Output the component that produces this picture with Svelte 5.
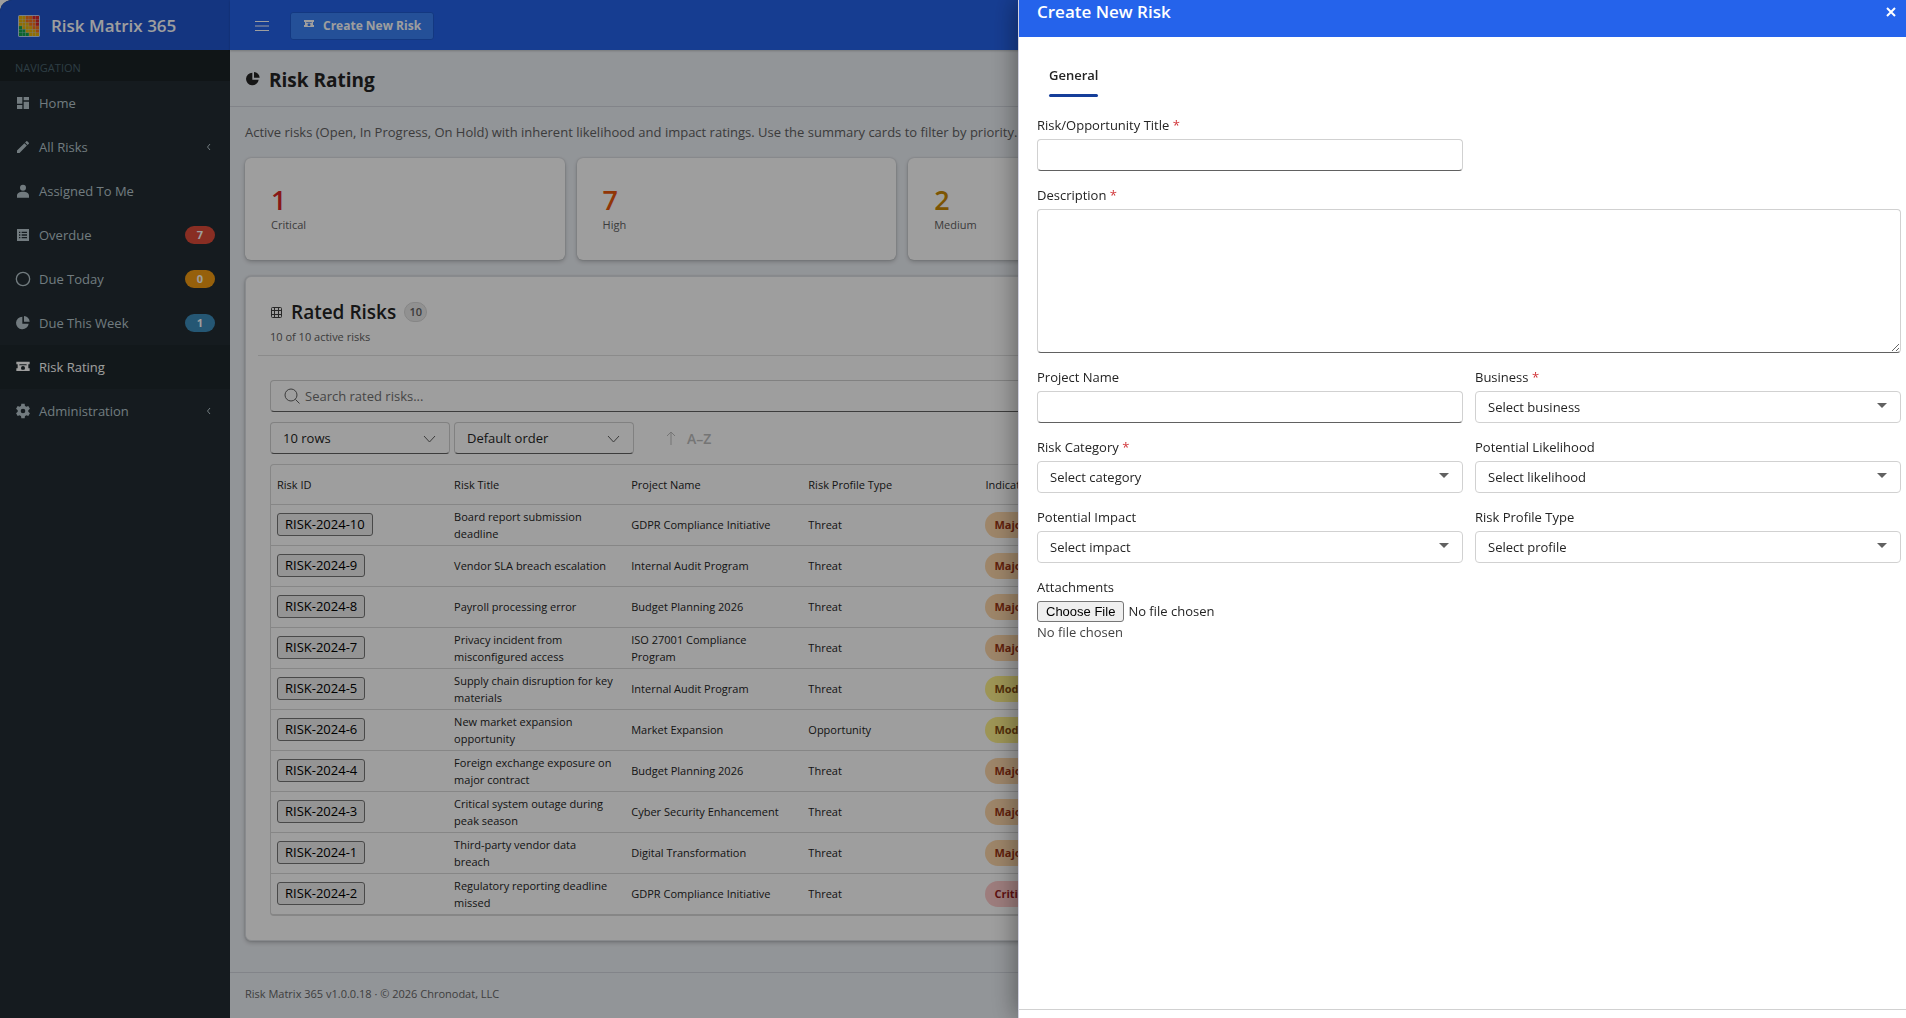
<script>
  const icons = {
    home: 'M3 13h8V3H3v10zm0 8h8v-6H3v6zm10 0h8V10h-8v11zm0-18v5h8V3h-8z',
    edit: 'M3 17.2V21h3.8L17.8 9.9l-3.7-3.7L3 17.2zM20.7 7a1 1 0 0 0 0-1.4l-2.3-2.3a1 1 0 0 0-1.4 0l-1.9 1.8 3.8 3.8L20.7 7z',
    person: 'M12 11.500a4.500 4.500 0 1 0 0-9 4.500 4.500 0 0 0 0 9zM12 13c-5 0-9 2-9 6v3h18v-3c0-4-4-6-9-6z',
    list: 'M3 3h18v18H3V3zm3 4v2h2V7H6zm4 0v2h8V7h-8zm-4 4v2h2v-2H6zm4 0v2h8v-2h-8zm-4 4v2h2v-2H6zm4 0v2h8v-2h-8z',
    circle: 'M12 1a11 11 0 1 0 0 22 11 11 0 0 0 0-22zm0 2a9 9 0 1 1 0 18 9 9 0 0 1 0-18z',
    pie: 'M11 2.500A9.500 9.500 0 1 0 20.500 13H11V2.500zM13.500 1.500V10H22a9 9 0 0 0-8.500-8.500z',
    ticket: 'M2 4h20v4h-2v6h2v4H2v-4h2V8H2V4zm5 4-1 1.500h12L17 8H7zM12 10.500a3 3 0 0 0-3 3c0 1 .5 2 1 2.500h4c.5-.5 1-1.500 1-2.500a3 3 0 0 0-3-3z',
    gear: 'M19.900 13.200a8 8 0 0 0 0-2.400l2.500-2-2.500-4.300-3 1.200a8 8 0 0 0-2-1.200L14.500 1h-5L9 4.500a8 8 0 0 0-2 1.200l-3-1.200-2.400 4.300 2.500 2a8 8 0 0 0 0 2.400l-2.500 2L4 19.500l3-1.200a8 8 0 0 0 2 1.200l.5 3.500h5l.5-3.500a8 8 0 0 0 2-1.200l3 1.200 2.400-4.300-2.500-2zM12 15.500a3.500 3.500 0 1 1 0-7 3.500 3.500 0 0 1 0 7z',
  };

  const navItems = [
    { label: 'Home', icon: 'home' },
    { label: 'All Risks', icon: 'edit', more: true },
    { label: 'Assigned To Me', icon: 'person' },
    { label: 'Overdue', icon: 'list', count: 7, tone: 'red' },
    { label: 'Due Today', icon: 'circle', count: 0, tone: 'orange' },
    { label: 'Due This Week', icon: 'pie', count: 1, tone: 'blue' },
    { label: 'Risk Rating', icon: 'ticket', active: true },
    { label: 'Administration', icon: 'gear', more: true },
  ];

  const cards = [
    { value: 1, label: 'Critical', tone: 'critical' },
    { value: 7, label: 'High', tone: 'high' },
    { value: 2, label: 'Medium', tone: 'medium' },
    { value: 0, label: 'Low', tone: 'low' },
    { value: 0, label: 'Unrated', tone: 'none' },
  ];

  const columns = ['Risk ID', 'Risk Title', 'Project Name', 'Risk Profile Type', 'Indicator', 'Likelihood', 'Impact', 'Status', 'Due Date'];

  const risks = [
    { id: 10, title: 'Board report submission deadline', project: 'GDPR Compliance Initiative', type: 'Threat', level: 'Major' },
    { id: 9, title: 'Vendor SLA breach escalation', project: 'Internal Audit Program', type: 'Threat', level: 'Major' },
    { id: 8, title: 'Payroll processing error', project: 'Budget Planning 2026', type: 'Threat', level: 'Major' },
    { id: 7, title: 'Privacy incident from misconfigured access', project: 'ISO 27001 Compliance\nProgram', type: 'Threat', level: 'Major' },
    { id: 5, title: 'Supply chain disruption for key materials', project: 'Internal Audit Program', type: 'Threat', level: 'Moderate' },
    { id: 6, title: 'New market expansion opportunity', project: 'Market Expansion', type: 'Opportunity', level: 'Moderate' },
    { id: 4, title: 'Foreign exchange exposure on major contract', project: 'Budget Planning 2026', type: 'Threat', level: 'Major' },
    { id: 3, title: 'Critical system outage during peak season', project: 'Cyber Security Enhancement', type: 'Threat', level: 'Major' },
    { id: 1, title: 'Third-party vendor data\nbreach', project: 'Digital Transformation', type: 'Threat', level: 'Major' },
    { id: 2, title: 'Regulatory reporting deadline missed', project: 'GDPR Compliance Initiative', type: 'Threat', level: 'Critical' },
  ];

  // heat map cells of the logo, row by row
  const heat = ['yyoorr', 'yyooor', 'yyyoor', 'gyyyoo', 'ggyyyo', 'gggyyy'];
  const heatColors = { g: '#16a34a', y: '#eab308', o: '#f97316', r: '#dc2626' };

  const fields = [
    { id: 'business', label: 'Business', required: true, prompt: 'Select business' },
    { id: 'category', label: 'Risk Category', required: true, prompt: 'Select category' },
    { id: 'likelihood', label: 'Potential Likelihood', prompt: 'Select likelihood' },
    { id: 'impact', label: 'Potential Impact', prompt: 'Select impact' },
    { id: 'profile', label: 'Risk Profile Type', prompt: 'Select profile' },
  ];

  let sidebarOpen = true;
  let drawerOpen = true;
</script>

<div class="app">
  {#if sidebarOpen}
    <aside class="sidebar">
      <div class="brand">
        <svg class="brand-logo" viewBox="0 0 24 24" aria-hidden="true">
          <rect width="24" height="24" rx="2" fill="#bcd3f5" />
          {#each heat as row, y}
            {#each row.split('') as cell, x}
              <rect x={1 + x * 3.7} y={1 + y * 3.7} width="3.4" height="3.4" fill={heatColors[cell]} />
            {/each}
          {/each}
        </svg>
        <span>Risk Matrix 365</span>
      </div>
      <p class="nav-header">NAVIGATION</p>
      <nav>
        {#each navItems as item (item.label)}
          <a href="#{item.icon}" class="nav-item" class:active={item.active}>
            <svg class="icon" viewBox="0 0 24 24" aria-hidden="true"><path fill-rule="evenodd" d={icons[item.icon]} /></svg>
            <span class="nav-label">{item.label}</span>
            {#if item.tone}
              <span class="badge badge--{item.tone}">{item.count}</span>
            {/if}
            {#if item.more}
              <svg class="nav-more" viewBox="0 0 8 8" aria-hidden="true"><path d="M5 1 2.500 4 5 7" /></svg>
            {/if}
          </a>
        {/each}
      </nav>
    </aside>
  {/if}

  <div class="main">
    <header class="topbar">
      <button class="menu-button" aria-label="Toggle navigation" on:click={() => (sidebarOpen = !sidebarOpen)}>
        <svg viewBox="0 0 14 10" aria-hidden="true"><path d="M0 .5h14M0 5h14M0 9.500h14" /></svg>
      </button>
      <button class="create-button" on:click={() => (drawerOpen = true)}>
        <svg class="icon-small" viewBox="0 0 24 24" aria-hidden="true"><path fill-rule="evenodd" d={icons.ticket} /></svg>
        Create New Risk
      </button>
    </header>

    <div class="page-header">
      <svg class="icon" viewBox="0 0 24 24" aria-hidden="true"><path d={icons.pie} /></svg>
      <h1>Risk Rating</h1>
    </div>

    <main class="content">
      <p class="intro">Active risks (Open, In Progress, On Hold) with inherent likelihood and impact ratings. Use the summary cards to filter by priority.</p>

      <div class="cards">
        {#each cards as card (card.label)}
          <div class="card">
            <strong class="card-value card-value--{card.tone}">{card.value}</strong>
            <span class="card-label">{card.label}</span>
          </div>
        {/each}
      </div>

      <section class="panel">
        <div class="panel-header">
          <div class="panel-title">
            <svg viewBox="0 0 13 13" aria-hidden="true"><path d="M2.500 1.500h8a1 1 0 0 1 1 1v8a1 1 0 0 1-1 1h-8a1 1 0 0 1-1-1v-8a1 1 0 0 1 1-1zM4.500 1.500v10M8.500 1.500v10M1.500 4.500h10M1.500 8.500h10" /></svg>
            <h2>Rated Risks</h2>
            <span class="count">10</span>
          </div>
          <p class="panel-subtitle">10 of 10 active risks</p>
        </div>

        <div class="panel-body">
          <label class="search">
            <svg viewBox="0 0 16 16" aria-hidden="true"><circle cx="7" cy="7" r="6" /><path d="m11.500 11.500 4 4" /></svg>
            <input type="search" placeholder="Search rated risks..." aria-label="Search rated risks" />
          </label>

          <div class="toolbar">
            <div class="dropdown">
              <select aria-label="Rows per page"><option>10 rows</option></select>
              <svg viewBox="0 0 12 8" aria-hidden="true"><path d="m.5 1 5.500 6 5.500-6" /></svg>
            </div>
            <div class="dropdown">
              <select aria-label="Sort order"><option>Default order</option></select>
              <svg viewBox="0 0 12 8" aria-hidden="true"><path d="m.5 1 5.500 6 5.500-6" /></svg>
            </div>
            <button class="sort-button" disabled>
              <svg viewBox="0 0 10 14" aria-hidden="true"><path d="M5 14V1M1 5l4-4 4 4" /></svg>
              A–Z
            </button>
          </div>

          <div class="table-wrap">
            <table>
              <thead>
                <tr>
                  {#each columns as column (column)}
                    <th>{column}</th>
                  {/each}
                </tr>
              </thead>
              <tbody>
                {#each risks as risk (risk.id)}
                  <tr>
                    <td><button class="risk-id">RISK-2024-{risk.id}</button></td>
                    <td>{risk.title}</td>
                    <td>{risk.project}</td>
                    <td>{risk.type}</td>
                    <td><span class="pill pill--{risk.level.toLowerCase()}">{risk.level}</span></td>
                    <td></td>
                    <td></td>
                    <td></td>
                    <td></td>
                  </tr>
                {/each}
              </tbody>
            </table>
          </div>
        </div>
      </section>
    </main>

    <footer class="footer">Risk Matrix 365 v1.0.0.18 · © 2026 Chronodat, LLC</footer>
  </div>
</div>

{#if drawerOpen}
  <div class="overlay"></div>
  <div class="drawer" role="dialog" aria-labelledby="drawer-title">
    <div class="drawer-header">
      <h2 id="drawer-title">Create New Risk</h2>
      <button class="close-button" aria-label="Close" on:click={() => (drawerOpen = false)}>
        <svg viewBox="0 0 10 10" aria-hidden="true"><path d="m1 1 8 8M9 1 1 9" /></svg>
      </button>
    </div>

    <div class="drawer-body">
      <div class="tabs" role="tablist">
        <button class="tab" role="tab" aria-selected="true">General</button>
      </div>

      <form class="form">
        <div class="field">
          <label for="title">Risk/Opportunity Title <span class="required">*</span></label>
          <input id="title" type="text" class="control" />
        </div>
        <div class="field field--wide">
          <label for="description">Description <span class="required">*</span></label>
          <textarea id="description" class="control control--area"></textarea>
        </div>
        <div class="field">
          <label for="project">Project Name</label>
          <input id="project" type="text" class="control" />
        </div>
        {#each fields as field (field.id)}
          <div class="field">
            <label for={field.id}>{field.label} {#if field.required}<span class="required">*</span>{/if}</label>
            <div class="select">
              <select id={field.id} class="control"><option>{field.prompt}</option></select>
              <svg viewBox="0 0 10 5" aria-hidden="true"><path d="M0 0h10L5 5z" /></svg>
            </div>
          </div>
        {/each}
        <div class="field field--wide">
          <label for="files">Attachments</label>
          <input id="files" type="file" class="file" />
          <span class="file-note">No file chosen</span>
        </div>
      </form>
    </div>
    <div class="drawer-footer"></div>
  </div>
{/if}

<style>
  :global(body) {
    background-color: #fff;
    color: #242424;
    font-family: "Segoe UI", "Open Sans", "Noto Sans", sans-serif;
    font-size: 13px;
    line-height: 20px;
  }

  * {
    box-sizing: border-box;
  }

  h1,
  h2,
  p {
    margin: 0;
  }

  button,
  input,
  select,
  textarea {
    font-family: inherit;
    font-size: 13px;
    color: inherit;
  }

  .app {
    display: flex;
    min-height: 100vh;
    border-top-left-radius: 12px;
    overflow: hidden;
  }

  .sidebar {
    flex: 0 0 230px;
    background-color: #222d32;
    color: #b8c7ce;
  }

  .brand {
    display: flex;
    align-items: center;
    gap: 11px;
    height: 50px;
    padding: 1px 18px 0;
    background-color: #2156cf;
    color: #fff;
    font-size: 17px;
    font-weight: 600;
  }

  .brand-logo {
    width: 22px;
    height: 22px;
  }

  .nav-header {
    padding: 10px 15px 5px;
    background-color: #1a2226;
    color: #4b646f;
    font-size: 11px;
    line-height: 16px;
  }

  .nav-item {
    display: flex;
    align-items: center;
    height: 44px;
    padding: 0 15px;
    color: inherit;
    text-decoration: none;
  }

  .nav-item.active {
    background-color: #1e282c;
    color: #fff;
  }

  .icon {
    width: 16px;
    height: 16px;
    fill: currentColor;
  }

  .icon-small {
    width: 12px;
    height: 12px;
    margin-bottom: 4px;
    fill: currentColor;
  }

  .nav-label {
    flex: 1;
    margin-left: 8px;
  }

  .nav-more {
    width: 8px;
    height: 8px;
    margin-right: 2px;
    fill: none;
    stroke: currentColor;
  }

  .badge {
    width: 30px;
    border-radius: 9px;
    color: #fff;
    font-size: 11px;
    font-weight: 700;
    line-height: 18px;
    text-align: center;
  }

  .badge--red {
    background-color: #dd4b39;
  }

  .badge--orange {
    background-color: #f39c12;
  }

  .badge--blue {
    background-color: #3c8dbc;
  }

  .main {
    display: flex;
    flex: 1;
    flex-direction: column;
    min-width: 0;
    background-color: #ecf0f5;
  }

  .topbar {
    display: flex;
    align-items: center;
    gap: 15px;
    height: 50px;
    padding: 1px 19px 0;
    background-color: #2563eb;
    box-shadow: 0 1px 2px rgba(0, 0, 0, .2);
    color: #fff;
  }

  .menu-button {
    display: flex;
    padding: 10px 6px;
    border: 0;
    background: none;
  }

  .menu-button svg {
    width: 14px;
    height: 10px;
    fill: none;
    stroke: #fff;
  }

  .create-button {
    display: flex;
    align-items: center;
    gap: 8px;
    height: 28px;
    padding: 0 12px;
    border: 1px solid #1f5bd0;
    border-radius: 3px;
    background-color: #3b82f6;
    font-size: 12px;
    font-weight: 700;
  }

  .page-header {
    display: flex;
    align-items: center;
    gap: 8px;
    height: 57px;
    padding: 4px 15px 0;
    border-bottom: 1px solid #d2d6de;
  }

  .page-header .icon {
    margin-bottom: 2px;
  }

  h1 {
    font-size: 19px;
    font-weight: 700;
    line-height: 28px;
  }

  .content {
    flex: 1;
    padding: 15px 15px 30px;
  }

  .intro {
    color: #616161;
  }

  .cards {
    display: grid;
    grid-template-columns: repeat(5, 1fr);
    gap: 12px;
    margin: 16px 0;
  }

  .card {
    display: flex;
    flex-direction: column;
    height: 102px;
    padding: 26px;
    border-radius: 6px;
    background-color: #fff;
    box-shadow: 0 0 2px rgba(0, 0, 0, .2), 0 2px 4px rgba(0, 0, 0, .2);
  }

  .card-value {
    font-size: 27px;
    font-weight: 600;
    line-height: 32px;
  }

  .card-value--critical {
    color: #dc2626;
  }

  .card-value--high {
    color: #ea580c;
  }

  .card-value--medium {
    color: #ca8a04;
  }

  .card-label {
    color: #616161;
    font-size: 11px;
    line-height: 18px;
  }

  .panel {
    padding: 0 12px 24px;
    border: 1px solid #dcdfe4;
    border-radius: 6px;
    background-color: #fff;
    box-shadow: 0 0 2px rgba(0, 0, 0, .2), 0 2px 4px rgba(0, 0, 0, .2);
  }

  .panel-header {
    padding: 20px 12px 8px;
    border-bottom: 1px solid #e0e0e0;
  }

  .panel-title {
    display: flex;
    align-items: center;
    gap: 8px;
    height: 30px;
  }

  .panel-title svg {
    width: 13px;
    height: 13px;
    fill: none;
    stroke: #424242;
  }

  .panel-title h2 {
    font-size: 19px;
    font-weight: 600;
    line-height: 28px;
  }

  .count {
    width: 23px;
    border: 1px solid #d8d8d8;
    border-radius: 10px;
    background-color: #ebebeb;
    color: #616161;
    font-size: 11px;
    font-weight: 600;
    line-height: 18px;
    text-align: center;
  }

  .panel-subtitle {
    color: #616161;
    font-size: 11px;
    line-height: 20px;
  }

  .panel-body {
    padding: 24px 12px 0;
  }

  .search {
    display: flex;
    align-items: center;
    gap: 5px;
    height: 32px;
    padding: 0 13px;
    border: 1px solid #d1d1d1;
    border-bottom-color: #616161;
    border-radius: 4px;
    color: #616161;
  }

  .search svg {
    width: 16px;
    height: 16px;
    fill: none;
    stroke: currentColor;
  }

  .search input {
    flex: 1;
    padding: 0;
    border: 0;
    background: none;
    outline: none;
  }

  .search input::placeholder {
    color: #707070;
  }

  .toolbar {
    display: flex;
    gap: 4px;
    margin: 10px 0;
  }

  .dropdown,
  .select {
    position: relative;
  }

  .dropdown select {
    width: 180px;
    height: 32px;
    padding: 0 12px;
    appearance: none;
    border: 1px solid #d1d1d1;
    border-bottom-color: #616161;
    border-radius: 4px;
    background: none;
  }

  .dropdown svg {
    position: absolute;
    top: 13px;
    right: 14px;
    width: 13px;
    height: 8px;
    fill: none;
    stroke: #616161;
    pointer-events: none;
  }

  .sort-button {
    display: flex;
    align-items: center;
    gap: 11px;
    padding: 0 28px;
    border: 0;
    background: none;
    color: #bdbdbd;
    font-size: 14px;
    font-weight: 600;
  }

  .sort-button svg {
    width: 10px;
    height: 14px;
    fill: none;
    stroke: currentColor;
  }

  .table-wrap {
    border: 1px solid #d8d8d8;
    border-bottom-width: 2px;
    border-radius: 4px;
    overflow: hidden;
  }

  table {
    width: 100%;
    border-collapse: collapse;
    table-layout: fixed;
    font-size: 11px;
    line-height: 17px;
  }

  th {
    height: 39px;
    padding: 0 6px;
    border-bottom: 1px solid #d8d8d8;
    font-weight: 400;
    text-align: left;
  }

  td {
    height: 41px;
    padding: 3px 6px;
    border-bottom: 1px solid #d8d8d8;
    white-space: pre-line;
  }

  tbody tr:last-child td {
    border-bottom: 0;
  }

  .risk-id {
    height: 23px;
    padding: 0 7px;
    border: 1px solid #767676;
    border-radius: 3px;
    background-color: #efefef;
    color: #000;
    line-height: 21px;
  }

  .pill {
    display: inline-block;
    padding: 0 9px;
    border-radius: 13px;
    font-weight: 700;
    line-height: 26px;
    vertical-align: middle;
  }

  .pill--major {
    background-color: #fed7aa;
    color: #9a3412;
  }

  .pill--moderate {
    background-color: #fef08a;
    color: #854d0e;
  }

  .pill--critical {
    background-color: #fecaca;
    color: #991b1b;
  }

  .footer {
    padding: 11px 15px 14px;
    border-top: 1px solid #d2d6de;
    color: #666;
    font-size: 11px;
  }

  .overlay {
    position: fixed;
    inset: 0;
    background-color: rgba(0, 0, 0, .38);
  }

  .drawer {
    position: fixed;
    top: 0;
    right: 0;
    bottom: 0;
    display: flex;
    flex-direction: column;
    width: calc(50vw - 65px);
    border-left: 1px solid #d1d1e0;
    background-color: #fff;
    box-shadow: -2px 0 24px rgba(0, 0, 0, .4);
  }

  .drawer-header {
    display: flex;
    align-items: flex-start;
    justify-content: space-between;
    padding: 0 10px 13px 18px;
    background-color: #2563eb;
    color: #fff;
  }

  .drawer-header h2 {
    font-size: 17px;
    font-weight: 600;
    line-height: 24px;
  }

  .close-button {
    display: flex;
    padding: 7px 0 0;
    border: 0;
    background: none;
  }

  .close-button svg {
    width: 10px;
    height: 10px;
    fill: none;
    stroke: #fff;
    stroke-width: 2;
  }

  .drawer-body {
    flex: 1;
    padding: 18px 5px 0 18px;
  }

  .tabs {
    padding: 0 12px;
    margin-bottom: 18px;
  }

  .tab {
    position: relative;
    display: block;
    height: 42px;
    padding: 0 0 2px;
    border: 0;
    background: none;
    font-weight: 600;
  }

  .tab::after {
    position: absolute;
    right: 0;
    bottom: 0;
    left: 0;
    height: 3px;
    border-radius: 2px;
    background-color: #153e9a;
    content: "";
  }

  .form {
    display: grid;
    grid-template-columns: 1fr 1fr;
    gap: 14px 12px;
  }

  .field {
    display: flex;
    flex-direction: column;
    gap: 4px;
  }

  .field:first-child {
    grid-column: 1 / 2;
  }

  .field--wide {
    grid-column: 1 / -1;
  }

  .required {
    color: #d13438;
  }

  .control {
    width: 100%;
    height: 32px;
    padding: 0 12px;
    border: 1px solid #d1d1d1;
    border-bottom-color: #616161;
    border-radius: 4px;
    background-color: #fff;
  }

  .control--area {
    display: block;
    height: 144px;
    resize: vertical;
  }

  .select .control {
    appearance: none;
    border-bottom-color: #d1d1d1;
  }

  .select svg {
    position: absolute;
    top: 12px;
    right: 14px;
    width: 10px;
    height: 5px;
    fill: #616161;
    pointer-events: none;
  }

  .file {
    height: 21px;
  }

  .file::file-selector-button {
    height: 21px;
    padding: 0 8px;
    border: 1px solid #767676;
    border-radius: 3px;
    background-color: #efefef;
    color: #000;
    font-family: "Liberation Sans", sans-serif;
  }

  .file-note {
    margin-top: -4px;
    color: #424242;
  }

  .drawer-footer {
    height: 9px;
    border-top: 1px solid #d1d1d1;
  }
</style>
